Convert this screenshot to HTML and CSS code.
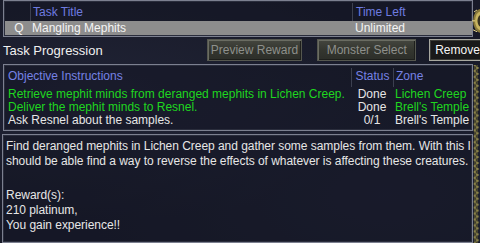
FILE: index.html
```html
<!DOCTYPE html>
<html>
<head>
<meta charset="utf-8">
<link rel="stylesheet" href="styles.css">
</head>
<body>
<div class="frame">
  <div class="main">
    <div class="box tasks">
      <div class="trow thead">
        <span class="c-q"></span>
        <span class="c-title">Task Title</span>
        <span class="c-time">Time Left</span>
      </div>
      <div class="trow sel">
        <span class="c-q">Q</span>
        <span class="c-title">Mangling Mephits</span>
        <span class="c-time">Unlimited</span>
      </div>
    </div>
    <div class="progress">
      <span class="label">Task Progression</span>
      <button class="btn off btn-preview">Preview Reward</button>
      <button class="btn off btn-monster">Monster Select</button>
      <button class="btn on btn-remove">Remove</button>
    </div>
    <div class="box objectives">
      <div class="orow ohead">
        <span class="o-text">Objective Instructions</span>
        <span class="o-status">Status</span>
        <span class="o-zone">Zone</span>
      </div>
      <div class="orow green">
        <span class="o-text">Retrieve mephit minds from deranged mephits in Lichen Creep.</span>
        <span class="o-status done">Done</span>
        <span class="o-zone">Lichen Creep</span>
      </div>
      <div class="orow green">
        <span class="o-text">Deliver the mephit minds to Resnel.</span>
        <span class="o-status done">Done</span>
        <span class="o-zone">Brell's Temple</span>
      </div>
      <div class="orow">
        <span class="o-text">Ask Resnel about the samples.</span>
        <span class="o-status">0/1</span>
        <span class="o-zone">Brell's Temple</span>
      </div>
    </div>
    <div class="box desc">
      <p>Find deranged mephits in Lichen Creep and gather some samples from them. With this I should be able find a way to reverse the effects of whatever is affecting these creatures.</p>
      <p class="reward">Reward(s):<br>210 platinum,<br>You gain experience!!</p>
    </div>
  </div>
  <div class="rail">
    <svg class="knob" width="8" height="28" viewBox="0 0 8 28">
      <ellipse cx="9" cy="14" rx="8" ry="12" fill="#8a7a3a"/>
      <ellipse cx="9" cy="14" rx="6" ry="9.5" fill="#c8b460"/>
      <ellipse cx="9" cy="14" rx="3.5" ry="6" fill="#3a3420"/>
      <path d="M2 5 L5 3 M1 23 L5 25 M0 14 L3 14" stroke="#e8d890" stroke-width="1"/>
    </svg>
    <svg class="chain" width="8" height="180" viewBox="0 0 8 180">
      <defs>
        <pattern id="zig" width="8" height="6" patternUnits="userSpaceOnUse">
          <path d="M2 0 L6 3 L2 6" fill="none" stroke="#8c8448" stroke-width="1.6"/>
          <path d="M6 0 L2 3 L6 6" fill="none" stroke="#4e4a2a" stroke-width="1"/>
        </pattern>
      </defs>
      <rect x="0" y="0" width="8" height="180" fill="url(#zig)"/>
    </svg>
  </div>
</div>
</body>
</html>
```

FILE: styles.css
```css
* { box-sizing: border-box; }
html, body {
  margin: 0;
  padding: 0;
  width: 480px;
  height: 243px;
  overflow: hidden;
}
body {
  background: #1a1c2a;
  font-family: "Liberation Sans", Arial, sans-serif;
  font-size: 12px;
  color: #e6e6e6;
}
.frame {
  display: flex;
  width: 480px;
  height: 243px;
  background:
    radial-gradient(ellipse at 20% 40%, rgba(40,44,66,0.5), transparent 60%),
    radial-gradient(ellipse at 80% 80%, rgba(34,38,58,0.6), transparent 55%),
    #181a28;
}
.main {
  width: 473px;
  padding-left: 3px;
  display: flex;
  flex-direction: column;
}
.rail {
  width: 7px;
  display: flex;
  flex-direction: column;
  align-items: flex-end;
}
.knob { margin-top: 7px; display: block; }
.chain { margin-top: 30px; display: block; }

.box {
  border: 1px solid #7c8090;
  box-shadow: inset 0 0 0 1px #2a2d3c;
  background: rgba(20, 22, 36, 0.55);
}

/* task list */
.tasks {
  height: 37px;
  padding: 1px 0 0 1px;
}
.trow {
  display: flex;
  align-items: center;
  white-space: nowrap;
}
.thead {
  height: 19px;
  color: #6e7be0;
  padding-top: 1px;
}
.thead .c-title, .thead .c-time { border-left: 1px solid #3c4050; line-height: 18px; }
.sel {
  height: 14px;
  background: #8d8d8d;
  color: #f4f4f4;
}
.c-q { width: 25px; text-align: center; padding-left: 3px; }
.c-title { width: 322px; padding-left: 2px; }
.c-time { flex: 1; padding-left: 3px; }

/* progression row */
.progress {
  display: flex;
  align-items: center;
  height: 27px;
  margin-right: -20px;
  padding-bottom: 1px;
}
.label {
  font-size: 13px;
  color: #f0f0f0;
  width: 204px;
  padding-top: 1px;
}
.btn {
  font-family: "Liberation Sans", Arial, sans-serif;
  font-size: 12px;
  height: 22px;
  padding: 0;
  margin: 0;
  text-align: center;
}
.off {
  color: #8e908c;
  background: linear-gradient(#44463f, #34362f 50%, #2c2e29);
  border: 1px solid #55574f;
  box-shadow: inset 1px 1px 0 #6a6c62, inset -1px -1px 0 #1e1f1c;
}
.btn-preview { width: 96px; }
.btn-monster { width: 99px; margin-left: 15px; }
.btn-remove { width: 64px; margin-left: 13px; }
.on {
  color: #f6f6f6;
  background: #191919;
  border: 1px solid #a8a8a0;
  box-shadow: inset 0 0 0 1px #3a3a36;
  text-align: left;
  padding-left: 5px;
}

/* objectives */
.objectives {
  height: 67px;
  padding: 3px 0 0 3px;
}
.orow {
  display: flex;
  white-space: nowrap;
  line-height: 13px;
}
.ohead {
  color: #7682e4;
  line-height: 17px;
  height: 19px;
  margin-bottom: 1px;
}
.ohead .o-status, .ohead .o-zone { border-left: 1px solid #3c4050; }
.green { color: #1fd61f; }
.o-text { width: 344px; padding-left: 1px; }
.o-status { width: 42px; text-align: center; color: #e6e6e6; }
.ohead .o-status { color: #7682e4; }
.o-zone { flex: 1; padding-left: 2px; }

/* description */
.desc {
  flex: 1;
  margin-top: 3px;
  margin-left: -1px;
  padding: 4px 0 0 3px;
  line-height: 15px;
  letter-spacing: -0.04px;
}
.desc p { margin: 0; }
.desc .reward { margin-top: 19px; }
```
